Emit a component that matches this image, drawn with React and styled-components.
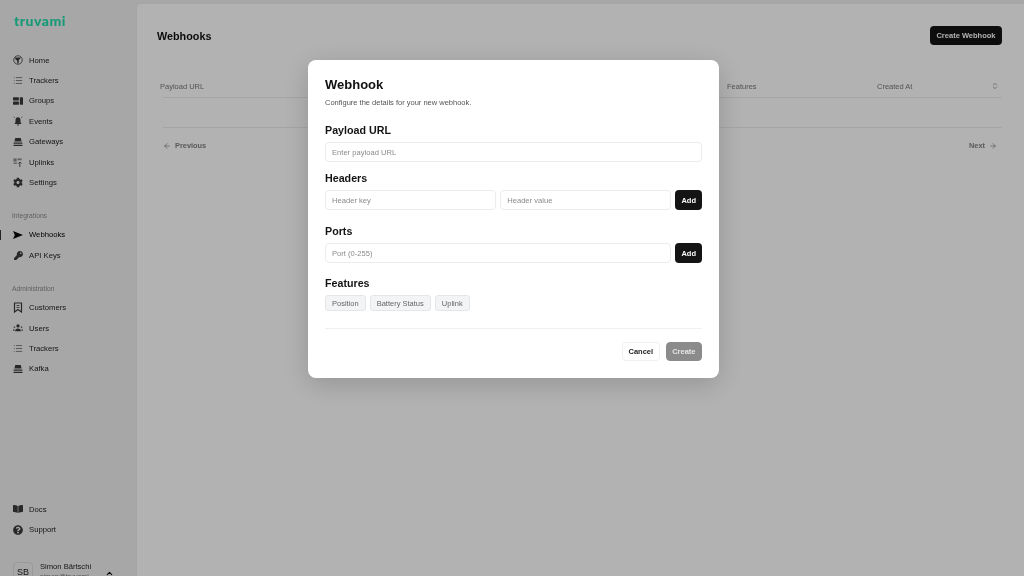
import styled, { createGlobalStyle } from 'styled-components';
import { ChevronUp, ChevronsUpDown, ArrowLeft, ArrowRight, List } from 'lucide-react';
import { FaKey, FaCog, FaQuestionCircle, FaBookOpen } from 'react-icons/fa';

const GlobalStyle = createGlobalStyle`
  html, body { margin: 0; height: 100%; }
  body {
    font-family: "Liberation Sans", Arial, sans-serif;
    background: #f0f0f0;
    color: #111;
    overflow: hidden;
  }
  * { box-sizing: border-box; }
`;

const Page = styled.div`
  display: flex;
  height: 100vh;
  overflow: hidden;
  background: #f0f0f0;
  filter: blur(0.5px);
`;

const Sidebar = styled.aside`
  width: 136px;
  flex: none;
  height: calc(100vh + 22px);
  display: flex;
  flex-direction: column;
  padding-top: 13px;
  position: relative;
`;

const Logo = styled.div`
  font-family: "Lato", sans-serif;
  font-weight: 900;
  font-size: 14px;
  line-height: 16px;
  letter-spacing: 0.5px;
  color: #1fdcaa;
  padding-left: 14px;
  margin-bottom: 21px;
`;

const NavGroup = styled.nav`
  display: flex;
  flex-direction: column;
  margin-bottom: ${(p) => p.$gap || 0}px;
`;

const GroupLabel = styled.div`
  font-size: 6.7px;
  line-height: 19px;
  color: #8a8a8a;
  padding-left: 12px;
`;

const NavItem = styled.a`
  height: 20.4px;
  display: flex;
  align-items: center;
  gap: 6px;
  padding-left: 13px;
  font-size: 7.7px;
  color: ${(p) => (p.$active ? '#000' : '#1c1c1c')};
  position: relative;

  ${(p) =>
    p.$active &&
    `&::before {
      content: '';
      position: absolute;
      left: 0;
      top: 5px;
      width: 1px;
      height: 10px;
      background: #333;
    }`}
`;

const IconSlot = styled.span`
  width: 10px;
  height: 10px;
  flex: none;
  display: flex;
  align-items: center;
  justify-content: center;
  color: ${(p) => (p.$strong ? '#0a0a0a' : '#3a3a3a')};

  svg { display: block; }
`;

const SidebarFoot = styled.div`
  margin-top: auto;
`;

const UserRow = styled.div`
  display: flex;
  align-items: flex-start;
  height: 36px;
  padding: 0 22px 0 13px;
  margin-top: 22px;
  gap: 7px;
`;

const Avatar = styled.div`
  width: 20px;
  height: 20px;
  flex: none;
  border-radius: 4px;
  border: 1px solid #dcdcdc;
  display: flex;
  align-items: center;
  justify-content: center;
  font-size: 9px;
  color: #222;
`;

const UserText = styled.div`
  font-size: 7.6px;
  line-height: 10px;
  color: #222;
  flex: 1;
  white-space: nowrap;

  small {
    display: block;
    font-size: 7px;
    color: #777;
  }
`;

const UserChevron = styled.span`
  margin-top: 2px;
  color: #111;
`;

const Main = styled.main`
  flex: 1;
  margin-top: 3px;
  background: #ffffff;
  border-radius: 5px 0 0 0;
  padding: 22px 22px 0 20px;
  border-left: 1px solid #ececec;
  border-top: 1px solid #ececec;
`;

const TopBar = styled.div`
  display: flex;
  align-items: center;
  justify-content: space-between;
  height: 19px;
`;

const PageTitle = styled.h1`
  margin: 0;
  font-size: 10.8px;
  font-weight: 700;
`;

const DarkButton = styled.button`
  border: 0;
  border-radius: 4px;
  background: #141414;
  color: #fafafa;
  font-family: inherit;
  font-size: 7.5px;
  font-weight: 700;
  height: ${(p) => p.$h || 20}px;
  padding: 0 ${(p) => p.$px || 6.5}px;
  flex: none;
`;

const TableHead = styled.div`
  display: grid;
  grid-template-columns: 567px 150px 1fr 14px;
  align-items: center;
  height: 22px;
  margin-top: 30px;
  padding-left: 3px;
  font-size: 7.5px;
  color: #777;

  svg { justify-self: end; margin-right: 3px; }
`;

const TableBody = styled.div`
  height: 31px;
  margin-left: 6px;
  border-top: 1px solid #ededed;
  border-bottom: 1px solid #ededed;
`;

const Pagination = styled.div`
  display: flex;
  justify-content: space-between;
  margin-top: 13px;
  padding: 0 5px 0 6px;
`;

const PageLink = styled.span`
  display: flex;
  align-items: center;
  gap: 4px;
  font-size: 7.4px;
  font-weight: 700;
  color: #808080;
`;

const Overlay = styled.div`
  position: fixed;
  inset: 0;
  background: rgba(0, 0, 0, 0.3);
  display: flex;
  justify-content: center;
  align-items: flex-start;
  padding: 60px 0 0 3px;
`;

const Modal = styled.section`
  width: 411px;
  height: 318px;
  background: #fff;
  border-radius: 8px;
  padding: 17px;
  box-shadow: 0 6px 28px rgba(0, 0, 0, 0.18);
  display: flex;
  flex-direction: column;
  filter: blur(0.3px);
`;

const ModalTitle = styled.h2`
  margin: 0;
  font-size: 13px;
  line-height: 16px;
  font-weight: 700;
`;

const ModalDesc = styled.p`
  margin: 4px 0 14px;
  font-size: 7.5px;
  line-height: 12px;
  color: #555;
`;

const Field = styled.div`
  margin-bottom: ${(p) => p.$mb || 0}px;
`;

const Label = styled.h3`
  margin: 0 0 5px;
  font-size: 10.7px;
  line-height: 14px;
  font-weight: 700;
  color: #141414;
`;

const Row = styled.div`
  display: flex;
  gap: 4px;
`;

const Input = styled.input`
  flex: 1;
  min-width: 0;
  height: 20px;
  border: 1px solid #ececec;
  border-radius: 4px;
  padding: 0 6px;
  font-family: inherit;
  font-size: 7.6px;
  background: #fff;

  &::placeholder { color: #8a8a8a; opacity: 1; }
`;

const Chips = styled.div`
  display: flex;
  gap: 4px;
`;

const Chip = styled.span`
  height: 16px;
  padding: 0 6px;
  display: flex;
  align-items: center;
  font-size: 7.5px;
  color: #666;
  background: #f3f4f5;
  border: 1px solid #e5e6e8;
  border-radius: 3px;
`;

const ModalFooter = styled.footer`
  margin-top: 17px;
  border-top: 1px solid #f0f0f0;
  padding-top: 13px;
  display: flex;
  justify-content: flex-end;
  gap: 6px;
`;

const GhostButton = styled.button`
  height: 19px;
  padding: 0 5.5px;
  border: 1px solid #f0f0f0;
  border-radius: 4px;
  background: #fff;
  color: #222;
  font-family: inherit;
  font-size: 7.5px;
  font-weight: 700;
`;

const MutedButton = styled(GhostButton)`
  background: #8b8b8b;
  border-color: #8b8b8b;
  color: #e6e6e6;
`;

const HomeIcon = () => (
  <svg width="10" height="10" viewBox="0 0 20 20">
    <circle cx="10" cy="10" r="8.5" fill="none" stroke="currentColor" strokeWidth="1.6" />
    <path d="M4 5h12l-3 4-1.5 1v6l-2.5 2-1-7-3-2z" fill="currentColor" />
  </svg>
);

const GroupsIcon = () => (
  <svg width="11" height="10" viewBox="0 0 22 20" fill="currentColor">
    <rect x="0" y="2" width="13" height="7" rx="1" />
    <rect x="15" y="2" width="7" height="16" rx="1" />
    <rect x="0" y="11" width="13" height="7" rx="1" />
  </svg>
);

const GatewayIcon = () => (
  <svg width="11" height="10" viewBox="0 0 22 20" fill="currentColor">
    <path d="M5 1h12l2 8H3z" />
    <rect x="1" y="11" width="20" height="3" rx="1" />
    <rect x="1" y="16" width="20" height="3" rx="1" />
  </svg>
);

const UplinkIcon = () => (
  <svg width="11" height="11" viewBox="0 0 22 22" fill="none" stroke="currentColor" strokeWidth="1.8">
    <rect x="1" y="2" width="7" height="7" fill="currentColor" stroke="none" opacity="0.55" />
    <rect x="10" y="2" width="9" height="4" fill="currentColor" stroke="none" opacity="0.55" />
    <rect x="1" y="11" width="8" height="3" fill="currentColor" stroke="none" opacity="0.55" />
    <path d="M15 21V10M11.5 13.5 15 10l3.5 3.5" />
  </svg>
);

const CustomerIcon = () => (
  <svg width="10" height="11" viewBox="0 0 20 22" fill="none" stroke="currentColor" strokeWidth="2.4">
    <path d="M3 20V2h14v18l-7-5z" />
    <path d="M7 7h6M7 11h6" strokeWidth="1.6" />
  </svg>
);

const UsersIcon = () => (
  <svg width="11" height="10" viewBox="0 0 24 20" fill="currentColor">
    <circle cx="12" cy="5" r="4" />
    <path d="M5 18c0-5 3-7 7-7s7 2 7 7z" />
    <circle cx="3.5" cy="8" r="2" opacity="0.7" />
    <circle cx="20.5" cy="8" r="2" opacity="0.7" />
    <path d="M0 17c0-3 1-5 3.5-5v5zM24 17c0-3-1-5-3.5-5v5z" opacity="0.7" />
  </svg>
);

const BellIcon = () => (
  <svg width="12" height="12" viewBox="0 0 22 22" fill="currentColor">
    <path d="M11 3c-3.4 0-5.5 2.5-5.5 6V14l-2.5 3.5h16L16.5 14V9c0-3.500-2.100-6-5.500-6z" />
    <rect x="8.5" y="18.5" width="5" height="2.5" rx="1" />
    <path d="M1.5 1.5l2.5 2.5M20.500 1.500l-2.500 2.500" stroke="currentColor" strokeWidth="1.5" />
  </svg>
);

const SendIcon = () => (
  <svg width="11" height="10" viewBox="0 0 22 20" fill="currentColor">
    <path d="M0 1 22 10 0 19 4 10z" />
  </svg>
);

const mainNav = [
  ['Home', <HomeIcon />],
  ['Trackers', <List size={11} strokeWidth={1.5} />],
  ['Groups', <GroupsIcon />],
  ['Events', <BellIcon />],
  ['Gateways', <GatewayIcon />],
  ['Uplinks', <UplinkIcon />],
  ['Settings', <FaCog size={11} />],
];

const adminNav = [
  ['Customers', <CustomerIcon />],
  ['Users', <UsersIcon />],
  ['Trackers', <List size={11} strokeWidth={1.5} />],
  ['Kafka', <GatewayIcon />],
];

const NavLink = ({ icon, label, active }) => (
  <NavItem $active={active}>
    <IconSlot $strong={active}>{icon}</IconSlot>
    {label}
  </NavItem>
);

export default function App() {
  return (
    <>
      <GlobalStyle />
      <Page>
        <Sidebar>
          <Logo>truvami</Logo>
          <NavGroup $gap={13}>
            {mainNav.map(([label, icon]) => (
              <NavLink key={label} label={label} icon={icon} />
            ))}
          </NavGroup>
          <GroupLabel>Integrations</GroupLabel>
          <NavGroup $gap={13}>
            <NavLink active label="Webhooks" icon={<SendIcon />} />
            <NavLink label="API Keys" icon={<FaKey size={9} />} />
          </NavGroup>
          <GroupLabel>Administration</GroupLabel>
          <NavGroup>
            {adminNav.map(([label, icon]) => (
              <NavLink key={label} label={label} icon={icon} />
            ))}
          </NavGroup>
          <SidebarFoot>
            <NavLink label="Docs" icon={<FaBookOpen size={10} />} />
            <NavLink label="Support" icon={<FaQuestionCircle size={10} />} />
            <UserRow>
              <Avatar>SB</Avatar>
              <UserText>
                Simon Bärtschi
                <small>simon@truvami</small>
              </UserText>
              <UserChevron><ChevronUp size={9} strokeWidth={3} /></UserChevron>
            </UserRow>
          </SidebarFoot>
        </Sidebar>
        <Main>
          <TopBar>
            <PageTitle>Webhooks</PageTitle>
            <DarkButton $h={19}>Create Webhook</DarkButton>
          </TopBar>
          <TableHead>
            <span>Payload URL</span>
            <span>Features</span>
            <span>Created At</span>
            <ChevronsUpDown size={8} />
          </TableHead>
          <TableBody />
          <Pagination>
            <PageLink><ArrowLeft size={8} /> Previous</PageLink>
            <PageLink>Next <ArrowRight size={8} /></PageLink>
          </Pagination>
        </Main>
      </Page>
      <Overlay>
        <Modal>
          <ModalTitle>Webhook</ModalTitle>
          <ModalDesc>Configure the details for your new webhook.</ModalDesc>
          <Field $mb={9}>
            <Label>Payload URL</Label>
            <Row><Input placeholder="Enter payload URL" /></Row>
          </Field>
          <Field $mb={14}>
            <Label>Headers</Label>
            <Row>
              <Input placeholder="Header key" />
              <Input placeholder="Header value" />
              <DarkButton $px={6}>Add</DarkButton>
            </Row>
          </Field>
          <Field $mb={13}>
            <Label>Ports</Label>
            <Row>
              <Input placeholder="Port (0-255)" />
              <DarkButton $px={6}>Add</DarkButton>
            </Row>
          </Field>
          <Field>
            <Label>Features</Label>
            <Chips>
              <Chip>Position</Chip>
              <Chip>Battery Status</Chip>
              <Chip>Uplink</Chip>
            </Chips>
          </Field>
          <ModalFooter>
            <GhostButton>Cancel</GhostButton>
            <MutedButton>Create</MutedButton>
          </ModalFooter>
        </Modal>
      </Overlay>
    </>
  );
}
